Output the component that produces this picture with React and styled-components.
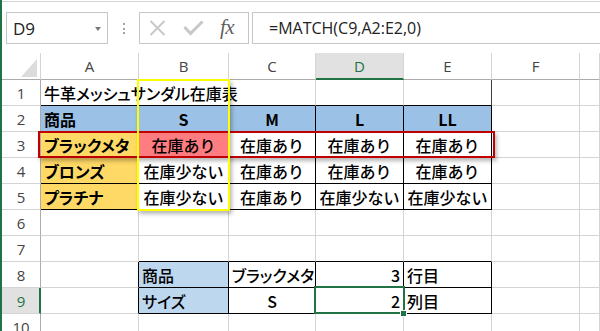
import React from 'react';
import styled, { createGlobalStyle } from 'styled-components';

const GlobalStyle = createGlobalStyle`
  html, body { margin: 0; padding: 0; background: #fff; }
  body { font-family: "Noto Sans CJK JP", sans-serif; }
`;

const GREEN = '#217346';
const GRID = '#d4d4d4';
const HEAD_LINE = '#ababab';
const BLACK = '#000';

const Window = styled.div`
  width: 600px;
  height: 331px;
  overflow: hidden;
  box-sizing: border-box;
  border-left: 2px solid ${GREEN};
  background: #fff;
`;

const FormulaBar = styled.div`
  margin-top: 1px;
  border-top: 1px solid ${GRID};
  height: 52px;
  box-sizing: border-box;
  padding: 10px 0 0 4px;
  display: flex;
  align-items: flex-start;
`;

const NameBox = styled.div`
  width: 102px;
  height: 32px;
  box-sizing: border-box;
  border: 1px solid #c6c6c6;
  display: flex;
  align-items: center;
  justify-content: space-between;
  padding: 0 6px 0 6px;
  font-family: "Open Sans", sans-serif;
  font-size: 17px;
  color: #222;
`;

const DropArrow = styled.span`
  width: 0;
  height: 0;
  border-left: 3.5px solid transparent;
  border-right: 3.5px solid transparent;
  border-top: 4px solid #777;
  margin-top: 1px;
`;

const Grip = styled.div`
  width: 31px;
  height: 32px;
  display: flex;
  flex-direction: column;
  align-items: center;
  justify-content: center;
  gap: 2.6px;
  padding-top: 1px;
  box-sizing: border-box;
`;

const GripDot = styled.span`
  width: 2px;
  height: 2px;
  background: #a6a6a6;
`;

const FxBox = styled.div`
  width: 110px;
  height: 32px;
  box-sizing: border-box;
  border: 1px solid #c6c6c6;
  display: flex;
  align-items: center;
  padding-left: 9px;
`;

const FxLabel = styled.span`
  font-family: "Liberation Serif", serif;
  font-style: italic;
  font-size: 21px;
  color: #5f5f5f;
  margin-left: 16px;
  margin-top: -2px;
  letter-spacing: -0.5px;
`;

const FormulaInput = styled.div`
  flex: 1;
  margin-left: 3px;
  height: 32px;
  box-sizing: border-box;
  border: 1px solid #c6c6c6;
  border-right: none;
  display: flex;
  align-items: center;
  padding-left: 16px;
  font-family: "Open Sans", sans-serif;
  font-size: 16px;
  color: #222;
`;

const SheetArea = styled.div`
  position: relative;
  display: grid;
  grid-template-columns: 39px 98px 90px 87px 88px 88px 88px 1fr;
  grid-template-rows: 27px repeat(10, 26px);
`;

const Corner = styled.div`
  box-sizing: border-box;
  border-right: 1px solid ${GRID};
  border-bottom: 1px solid ${HEAD_LINE};
  display: flex;
  justify-content: flex-end;
  align-items: flex-end;
  padding: 0 3px 2px 0;
`;

const CornerTriangle = styled.span`
  width: 0;
  height: 0;
  border-left: 16px solid transparent;
  border-bottom: 18px solid #dcdcdc;
`;

const ColHead = styled.div`
  box-sizing: border-box;
  border-right: 1px solid ${GRID};
  border-bottom: ${p => (p.$active ? `2px solid ${GREEN}` : `1px solid ${HEAD_LINE}`)};
  background: ${p => (p.$active ? '#e1e1e1' : '#fff')};
  color: ${p => (p.$active ? GREEN : '#444')};
  display: flex;
  align-items: center;
  justify-content: center;
  font-family: "Open Sans", sans-serif;
  font-size: 15px;
  padding-top: ${p => (p.$active ? '1px' : '0')};
`;

const RowHead = styled.div`
  box-sizing: border-box;
  border-right: ${p => (p.$active ? `2px solid ${GREEN}` : `1px solid ${HEAD_LINE}`)};
  border-bottom: 1px solid ${GRID};
  background: ${p => (p.$active ? '#e1e1e1' : '#fff')};
  color: ${p => (p.$active ? GREEN : '#444')};
  display: flex;
  align-items: center;
  justify-content: center;
  font-family: "Open Sans", sans-serif;
  font-size: 15px;
  padding-left: ${p => (p.$active ? '1px' : '0')};
`;

const Cell = styled.div`
  box-sizing: border-box;
  border-right: 1px solid ${p => p.$br || GRID};
  border-bottom: 1px solid ${p => p.$bb || GRID};
  background: ${p => p.$bg || 'transparent'};
  display: flex;
  align-items: center;
  justify-content: ${p =>
    p.$align === 'center' ? 'center' : p.$align === 'right' ? 'flex-end' : 'flex-start'};
  padding: 1px 3px 0 3px;
  font-size: 16px;
  font-weight: ${p => (p.$bold ? 700 : 500)};
  color: #000;
  white-space: nowrap;
  overflow: ${p => (p.$spill ? 'visible' : 'hidden')};
  font-feature-settings: ${p => (p.$palt ? '"palt"' : 'normal')};
  position: relative;
  z-index: ${p => (p.$spill ? 1 : 0)};
`;

const Frame = styled.div`
  position: absolute;
  box-sizing: border-box;
  left: ${p => p.$x}px;
  top: ${p => p.$y}px;
  width: ${p => p.$w}px;
  height: ${p => p.$h}px;
  border: 2px solid ${p => p.$color};
  box-shadow: ${p => (p.$shadow ? '2px 3px 4px rgba(0,0,0,0.28)' : 'none')};
  pointer-events: none;
  z-index: ${p => p.$z};
`;

const FillHandle = styled.span`
  position: absolute;
  left: 398px;
  top: 257px;
  width: 5px;
  height: 5px;
  background: ${GREEN};
  border: 1px solid #fff;
  z-index: 6;
`;

const BLUE = '#9bc2e6';
const LIGHT_BLUE = '#bdd7ee';
const GOLD = '#ffd966';
const PINK = '#ff7c80';

const COLS = ['A', 'B', 'C', 'D', 'E', 'F', ''];

const DATA = {
  '1A': { t: '牛革メッシュサンダル在庫表', palt: true, spill: true },
  '2A': { t: '商品', bg: BLUE, bold: true },
  '2B': { t: 'S', bg: BLUE, align: 'center', bold: true },
  '2C': { t: 'M', bg: BLUE, align: 'center', bold: true },
  '2D': { t: 'L', bg: BLUE, align: 'center', bold: true },
  '2E': { t: 'LL', bg: BLUE, align: 'center', bold: true },
  '3A': { t: 'ブラックメタ', bg: GOLD, bold: true, palt: true },
  '3B': { t: '在庫あり', bg: PINK, align: 'center' },
  '3C': { t: '在庫あり', align: 'center' },
  '3D': { t: '在庫あり', align: 'center' },
  '3E': { t: '在庫あり', align: 'center' },
  '4A': { t: 'ブロンズ', bg: GOLD, bold: true, palt: true },
  '4B': { t: '在庫少ない', align: 'center' },
  '4C': { t: '在庫あり', align: 'center' },
  '4D': { t: '在庫あり', align: 'center' },
  '4E': { t: '在庫あり', align: 'center' },
  '5A': { t: 'プラチナ', bg: GOLD, bold: true, palt: true },
  '5B': { t: '在庫少ない', align: 'center' },
  '5C': { t: '在庫あり', align: 'center' },
  '5D': { t: '在庫少ない', align: 'center' },
  '5E': { t: '在庫少ない', align: 'center' },
  '8B': { t: '商品', bg: LIGHT_BLUE },
  '8C': { t: 'ブラックメタ', palt: true },
  '8D': { t: '3', align: 'right' },
  '8E': { t: '行目' },
  '9B': { t: 'サイズ', bg: LIGHT_BLUE, palt: true },
  '9C': { t: 'S', align: 'center' },
  '9D': { t: '2', align: 'right' },
  '9E': { t: '列目' },
};

// bordered ranges: [r1, r2, c1, c2] (c: 1 = A)
const BOXES = [
  [2, 5, 1, 5],
  [8, 9, 2, 5],
];

const inBox = (r, c) => BOXES.some(([r1, r2, c1, c2]) => r >= r1 && r <= r2 && c >= c1 && c <= c2);

function rightColor(r, c) {
  if (inBox(r, c) || inBox(r, c + 1)) return BLACK;
  if (r === 1 && c === 5) return '#404040';
  return GRID;
}

function bottomColor(r, c) {
  if (inBox(r, c) || inBox(r + 1, c)) return BLACK;
  return GRID;
}

function CancelIcon() {
  return (
    <svg width="17" height="16" viewBox="0 0 17 16">
      <path d="M1.5 1 L15.5 15 M15.5 1 L1.5 15" stroke="#c8c8c8" strokeWidth="2" fill="none" />
    </svg>
  );
}

function EnterIcon() {
  return (
    <svg width="21" height="16" viewBox="0 0 21 16" style={{ marginLeft: 17 }}>
      <path d="M1.5 7 L7.5 13.5 L19.5 1.5" stroke="#c8c8c8" strokeWidth="3" fill="none" />
    </svg>
  );
}

export default function App() {
  const rows = Array.from({ length: 10 }, (_, i) => i + 1);
  return (
    <>
      <GlobalStyle />
      <Window>
        <FormulaBar>
          <NameBox>
            <span>D9</span>
            <DropArrow />
          </NameBox>
          <Grip>
            <GripDot />
            <GripDot />
            <GripDot />
          </Grip>
          <FxBox>
            <CancelIcon />
            <EnterIcon />
            <FxLabel>fx</FxLabel>
          </FxBox>
          <FormulaInput>=MATCH(C9,A2:E2,0)</FormulaInput>
        </FormulaBar>
        <SheetArea>
          <Corner>
            <CornerTriangle />
          </Corner>
          {COLS.map((c, i) => (
            <ColHead key={`h${i}`} $active={c === 'D'}>
              {c}
            </ColHead>
          ))}
          {rows.map(r => (
            <React.Fragment key={r}>
              <RowHead $active={r === 9}>{r}</RowHead>
              {COLS.map((c, i) => {
                const d = DATA[`${r}${c}`] || {};
                return (
                  <Cell
                    key={`${r}-${i}`}
                    $br={rightColor(r, i + 1)}
                    $bb={bottomColor(r, i + 1)}
                    $bg={d.bg}
                    $align={d.align}
                    $bold={d.bold}
                    $palt={d.palt}
                    $spill={d.spill}
                  >
                    {d.t}
                  </Cell>
                );
              })}
            </React.Fragment>
          ))}
          <Frame $x={36} $y={78} $w={457} $h={27} $color="#c00000" $shadow $z={3} />
          <Frame $x={135} $y={26} $w={93} $h={132} $color="#ffff00" $shadow $z={4} />
          <Frame $x={312} $y={233} $w={91} $h={28} $color={GREEN} $z={5} />
          <FillHandle />
        </SheetArea>
      </Window>
    </>
  );
}
